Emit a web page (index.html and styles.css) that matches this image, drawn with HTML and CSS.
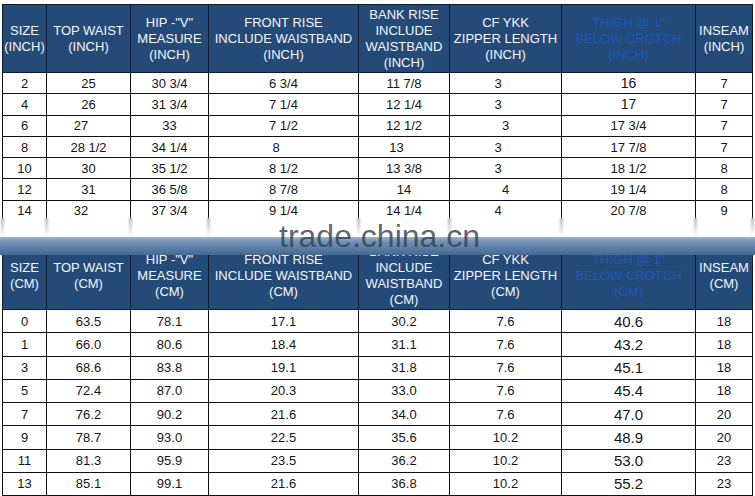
FILE: index.html
```html
<!DOCTYPE html>
<html>
<head>
<meta charset="utf-8">
<link rel="stylesheet" href="styles.css">
</head>
<body>
<div class="page">
  <table class="chart chart-inch">
    <colgroup>
      <col class="c1"><col class="c2"><col class="c3"><col class="c4"><col class="c5"><col class="c6"><col class="c7"><col class="c8">
    </colgroup>
    <thead>
      <tr>
        <th>SIZE<br>(INCH)</th>
        <th>TOP WAIST<br>(INCH)</th>
        <th>HIP -"V"<br>MEASURE<br>(INCH)</th>
        <th>FRONT RISE<br>INCLUDE WAISTBAND<br>(INCH)</th>
        <th>BANK RISE<br>INCLUDE<br>WAISTBAND<br>(INCH)</th>
        <th>CF YKK<br>ZIPPER LENGTH<br>(INCH)</th>
        <th class="thigh">THIGH @ 1"<br>BELOW CROTCH<br>(INCH)</th>
        <th>INSEAM<br>(INCH)</th>
      </tr>
    </thead>
    <tbody>
      <tr><td>2</td><td>25</td><td>30 3/4</td><td>6 3/4</td><td>11 7/8</td><td class="sl">3</td><td class="big">16</td><td>7</td></tr>
      <tr><td>4</td><td>26</td><td>31 3/4</td><td>7 1/4</td><td>12 1/4</td><td class="sl">3</td><td class="big">17</td><td>7</td></tr>
      <tr><td>6</td><td class="sl">27</td><td>33</td><td>7 1/2</td><td>12 1/2</td><td>3</td><td>17 3/4</td><td>7</td></tr>
      <tr><td>8</td><td>28 1/2</td><td>34 1/4</td><td class="sl">8</td><td class="sl">13</td><td class="sl">3</td><td>17 7/8</td><td>7</td></tr>
      <tr><td>10</td><td>30</td><td>35 1/2</td><td>8 1/2</td><td>13 3/8</td><td class="sl">3</td><td>18 1/2</td><td>8</td></tr>
      <tr><td>12</td><td>31</td><td>36 5/8</td><td>8 7/8</td><td>14</td><td>4</td><td>19 1/4</td><td>8</td></tr>
      <tr><td>14</td><td class="sl">32</td><td>37 3/4</td><td>9 1/4</td><td>14 1/4</td><td class="sl">4</td><td>20 7/8</td><td>9</td></tr>
    </tbody>
  </table>

  <table class="chart chart-cm">
    <colgroup>
      <col class="c1"><col class="c2"><col class="c3"><col class="c4"><col class="c5"><col class="c6"><col class="c7"><col class="c8">
    </colgroup>
    <thead>
      <tr>
        <th>SIZE<br>(CM)</th>
        <th>TOP WAIST<br>(CM)</th>
        <th>HIP -"V"<br>MEASURE<br>(CM)</th>
        <th>FRONT RISE<br>INCLUDE WAISTBAND<br>(CM)</th>
        <th>BANK RISE<br>INCLUDE<br>WAISTBAND<br>(CM)</th>
        <th>CF YKK<br>ZIPPER LENGTH<br>(CM)</th>
        <th class="thigh">THIGH @ 1"<br>BELOW CROTCH<br>(CM)</th>
        <th>INSEAM<br>(CM)</th>
      </tr>
    </thead>
    <tbody>
      <tr><td>0</td><td>63.5</td><td>78.1</td><td>17.1</td><td>30.2</td><td>7.6</td><td class="big">40.6</td><td>18</td></tr>
      <tr><td>1</td><td>66.0</td><td>80.6</td><td>18.4</td><td>31.1</td><td>7.6</td><td class="big">43.2</td><td>18</td></tr>
      <tr><td>3</td><td>68.6</td><td>83.8</td><td>19.1</td><td>31.8</td><td>7.6</td><td class="big">45.1</td><td>18</td></tr>
      <tr><td>5</td><td>72.4</td><td>87.0</td><td>20.3</td><td>33.0</td><td>7.6</td><td class="big">45.4</td><td>18</td></tr>
      <tr><td>7</td><td>76.2</td><td>90.2</td><td>21.6</td><td>34.0</td><td>7.6</td><td class="big">47.0</td><td>20</td></tr>
      <tr><td>9</td><td>78.7</td><td>93.0</td><td>22.5</td><td>35.6</td><td>10.2</td><td class="big">48.9</td><td>20</td></tr>
      <tr><td>11</td><td>81.3</td><td>95.9</td><td>23.5</td><td>36.2</td><td>10.2</td><td class="big">53.0</td><td>23</td></tr>
      <tr><td>13</td><td>85.1</td><td>99.1</td><td>21.6</td><td>36.8</td><td>10.2</td><td class="big">55.2</td><td>23</td></tr>
    </tbody>
  </table>

  <div class="watermark">
    <div class="haze"></div>
    <div class="band"></div>
    <span class="wm-text">trade.china.cn</span>
  </div>
</div>
</body>
</html>
```

FILE: styles.css
```css
html, body {
  margin: 0;
  padding: 0;
  background: #ffffff;
}

body {
  font-family: "Liberation Sans", Arial, sans-serif;
  color: #151515;
}

.page {
  position: relative;
  width: 755px;
  height: 496px;
  overflow: hidden;
  padding: 4px 0 0 2px;
  box-sizing: border-box;
}

.chart {
  border-collapse: collapse;
  table-layout: fixed;
  width: 751px;
}

.chart-cm {
  margin-top: 20px;
}

.c1 { width: 44px; }
.c2 { width: 84px; }
.c3 { width: 78px; }
.c4 { width: 150px; }
.c5 { width: 91px; }
.c6 { width: 112px; }
.c7 { width: 134px; }
.c8 { width: 57px; }

.chart th {
  background: #244a78;
  color: #f4f6fa;
  font-weight: normal;
  font-size: 13px;
  line-height: 16px;
  text-align: center;
  vertical-align: middle;
  padding: 0;
  border: 1px solid #0d1c30;
  white-space: nowrap;
}

.chart th.thigh {
  color: #2155b8;
}

.chart-inch thead tr { height: 68px; }
.chart-cm thead tr { height: 67px; }

.chart td {
  border: 1px solid #111;
  text-align: center;
  vertical-align: middle;
  font-size: 13px;
  line-height: 15px;
  padding: 0;
  white-space: nowrap;
}

.chart-inch tbody tr { height: 21.3px; }
.chart-cm tbody tr { height: 23.25px; }

.chart td.sl {
  padding-right: 15px;
}

.chart-inch td.big { font-size: 14px; }
.chart-cm td.big { font-size: 15px; }

/* watermark overlay */
.watermark {
  position: absolute;
  left: 0;
  top: 218px;
  width: 755px;
  height: 38px;
  pointer-events: none;
}

.haze {
  position: absolute;
  left: 0;
  top: 0;
  width: 100%;
  height: 19px;
  background:
    linear-gradient(to bottom, rgba(90,90,90,.45), rgba(120,120,120,0)) 1px 0 / 3px 100% no-repeat,
    linear-gradient(to bottom, rgba(90,90,90,.45), rgba(120,120,120,0)) 45px 0 / 3px 100% no-repeat,
    linear-gradient(to bottom, rgba(90,90,90,.45), rgba(120,120,120,0)) 129px 0 / 3px 100% no-repeat,
    linear-gradient(to bottom, rgba(90,90,90,.45), rgba(120,120,120,0)) 207px 0 / 3px 100% no-repeat,
    linear-gradient(to bottom, rgba(90,90,90,.45), rgba(120,120,120,0)) 357px 0 / 3px 100% no-repeat,
    linear-gradient(to bottom, rgba(90,90,90,.45), rgba(120,120,120,0)) 448px 0 / 3px 100% no-repeat,
    linear-gradient(to bottom, rgba(90,90,90,.45), rgba(120,120,120,0)) 560px 0 / 3px 100% no-repeat,
    linear-gradient(to bottom, rgba(90,90,90,.45), rgba(120,120,120,0)) 694px 0 / 3px 100% no-repeat,
    linear-gradient(to bottom, rgba(90,90,90,.45), rgba(120,120,120,0)) 751px 0 / 3px 100% no-repeat,
    #ffffff;
  filter: blur(1px);
}

.band {
  position: absolute;
  left: 0;
  top: 19px;
  width: 100%;
  height: 18px;
  background: linear-gradient(to bottom, #9cb4cd 0%, #7392b6 25%, #5b7fa8 60%, #46698f 100%);
}

.wm-text {
  position: absolute;
  left: 279px;
  top: 0;
  font-family: "Liberation Sans", Arial, sans-serif;
  font-size: 32px;
  line-height: 36px;
  color: rgba(55, 66, 80, 0.82);
  letter-spacing: 0;
}
```
